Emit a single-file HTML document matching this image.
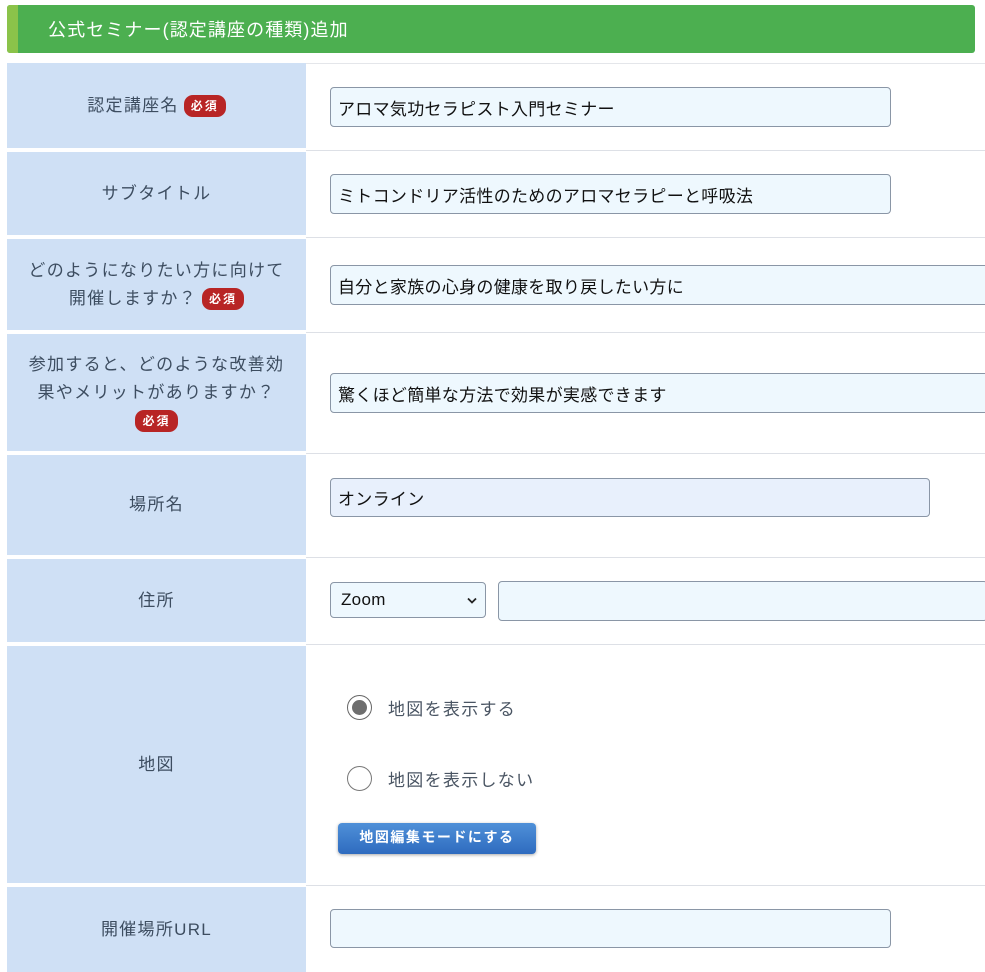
<!DOCTYPE html>
<html><head><meta charset="utf-8"><style>
body{margin:0;width:985px;height:972px;background:#fff;position:relative;overflow:hidden;font-family:"Liberation Sans","Noto Sans CJK JP",sans-serif}
.a{position:absolute}
.hd{left:7px;top:5px;width:968px;height:48px;background:#4caf50;border-radius:3px;overflow:hidden}
.hd i{position:absolute;left:0;top:0;width:11px;height:48px;background:#8bc34a}
.hd span{position:absolute;left:41px;top:11px;color:#fff;font-size:18px;letter-spacing:1.1px}
.lb{left:7px;width:299px;background:#cfe0f5;color:#3d4d60;font-size:17px;letter-spacing:1.3px;text-align:center;display:flex;align-items:center;justify-content:center;line-height:28px}
.ln{left:306px;width:679px;height:1px;background:#dde0e6}
.in{border:1px solid #8a96a6;border-radius:4px;background:#eef8fe;box-sizing:border-box;font-size:17px;letter-spacing:0.3px;color:#111;padding:0 7px;display:flex;align-items:center}
.rq{display:inline-block;background:#b82525;color:#fff;font-size:12px;font-weight:bold;border-radius:9px;padding:0 7px;line-height:22px;vertical-align:middle;margin-left:5px;letter-spacing:2px}
.rd{width:25px;height:25px;border:1px solid #777;border-radius:50%;box-sizing:border-box;background:#fff}
.rt{font-size:17px;color:#4a5563;letter-spacing:1.3px}
</style></head><body>
<div class="a hd"><i></i><span>公式セミナー(認定講座の種類)追加</span></div>
<div class="a ln" style="top:63px;background:#e4e6ea"></div>

<div class="a lb" style="top:63px;height:85px">認定講座名<span class="rq">必須</span></div>
<div class="a in" style="left:330px;top:87px;width:561px;height:40px">アロマ気功セラピスト入門セミナー</div>
<div class="a ln" style="top:150px"></div>

<div class="a lb" style="top:152px;height:83px">サブタイトル</div>
<div class="a in" style="left:330px;top:174px;width:561px;height:40px">ミトコンドリア活性のためのアロマセラピーと呼吸法</div>
<div class="a ln" style="top:237px"></div>

<div class="a lb" style="top:239px;height:91px"><div>どのようになりたい方に向けて<br>開催しますか？<span class="rq">必須</span></div></div>
<div class="a in" style="left:330px;top:265px;width:660px;height:40px">自分と家族の心身の健康を取り戻したい方に</div>
<div class="a ln" style="top:332px"></div>

<div class="a lb" style="top:334px;height:117px"><div>参加すると、どのような改善効<br>果やメリットがありますか？<br><span class="rq" style="margin:0">必須</span></div></div>
<div class="a in" style="left:330px;top:373px;width:660px;height:40px">驚くほど簡単な方法で効果が実感できます</div>
<div class="a ln" style="top:453px"></div>

<div class="a lb" style="top:455px;height:100px">場所名</div>
<div class="a in" style="left:330px;top:478px;width:600px;height:39px;background:#e8f0fc">オンライン</div>
<div class="a ln" style="top:557px"></div>

<div class="a lb" style="top:559px;height:83px">住所</div>
<div class="a in" style="left:330px;top:582px;width:156px;height:36px;justify-content:space-between;padding:0 8px 0 10px"><span style="font-size:17px;letter-spacing:0.3px">Zoom</span><svg width="10" height="7" viewBox="0 0 10 7"><path d="M1 1.5L5 5.5L9 1.5" stroke="#222" stroke-width="1.8" fill="none"/></svg></div>
<div class="a in" style="left:498px;top:581px;width:490px;height:40px"></div>
<div class="a ln" style="top:644px"></div>

<div class="a lb" style="top:646px;height:237px">地図</div>
<div class="a rd" style="left:347px;top:695px;border-color:#666"><div style="width:15px;height:15px;border-radius:50%;background:#6e6e6e;margin:4px"></div></div>
<div class="a rt" style="left:388px;top:695px">地図を表示する</div>
<div class="a rd" style="left:347px;top:766px"></div>
<div class="a rt" style="left:388px;top:766px">地図を表示しない</div>
<div class="a" style="left:338px;top:823px;width:198px;height:31px;border-radius:4px;background:linear-gradient(#4f90d8,#2e6bbf);color:#fff;font-size:14px;font-weight:bold;text-align:center;line-height:29px;box-shadow:0 1px 3px rgba(0,0,0,.35);letter-spacing:1.5px">地図編集モードにする</div>
<div class="a ln" style="top:885px"></div>

<div class="a lb" style="top:887px;height:85px">開催場所URL</div>
<div class="a in" style="left:330px;top:909px;width:561px;height:39px"></div>
</body></html>
